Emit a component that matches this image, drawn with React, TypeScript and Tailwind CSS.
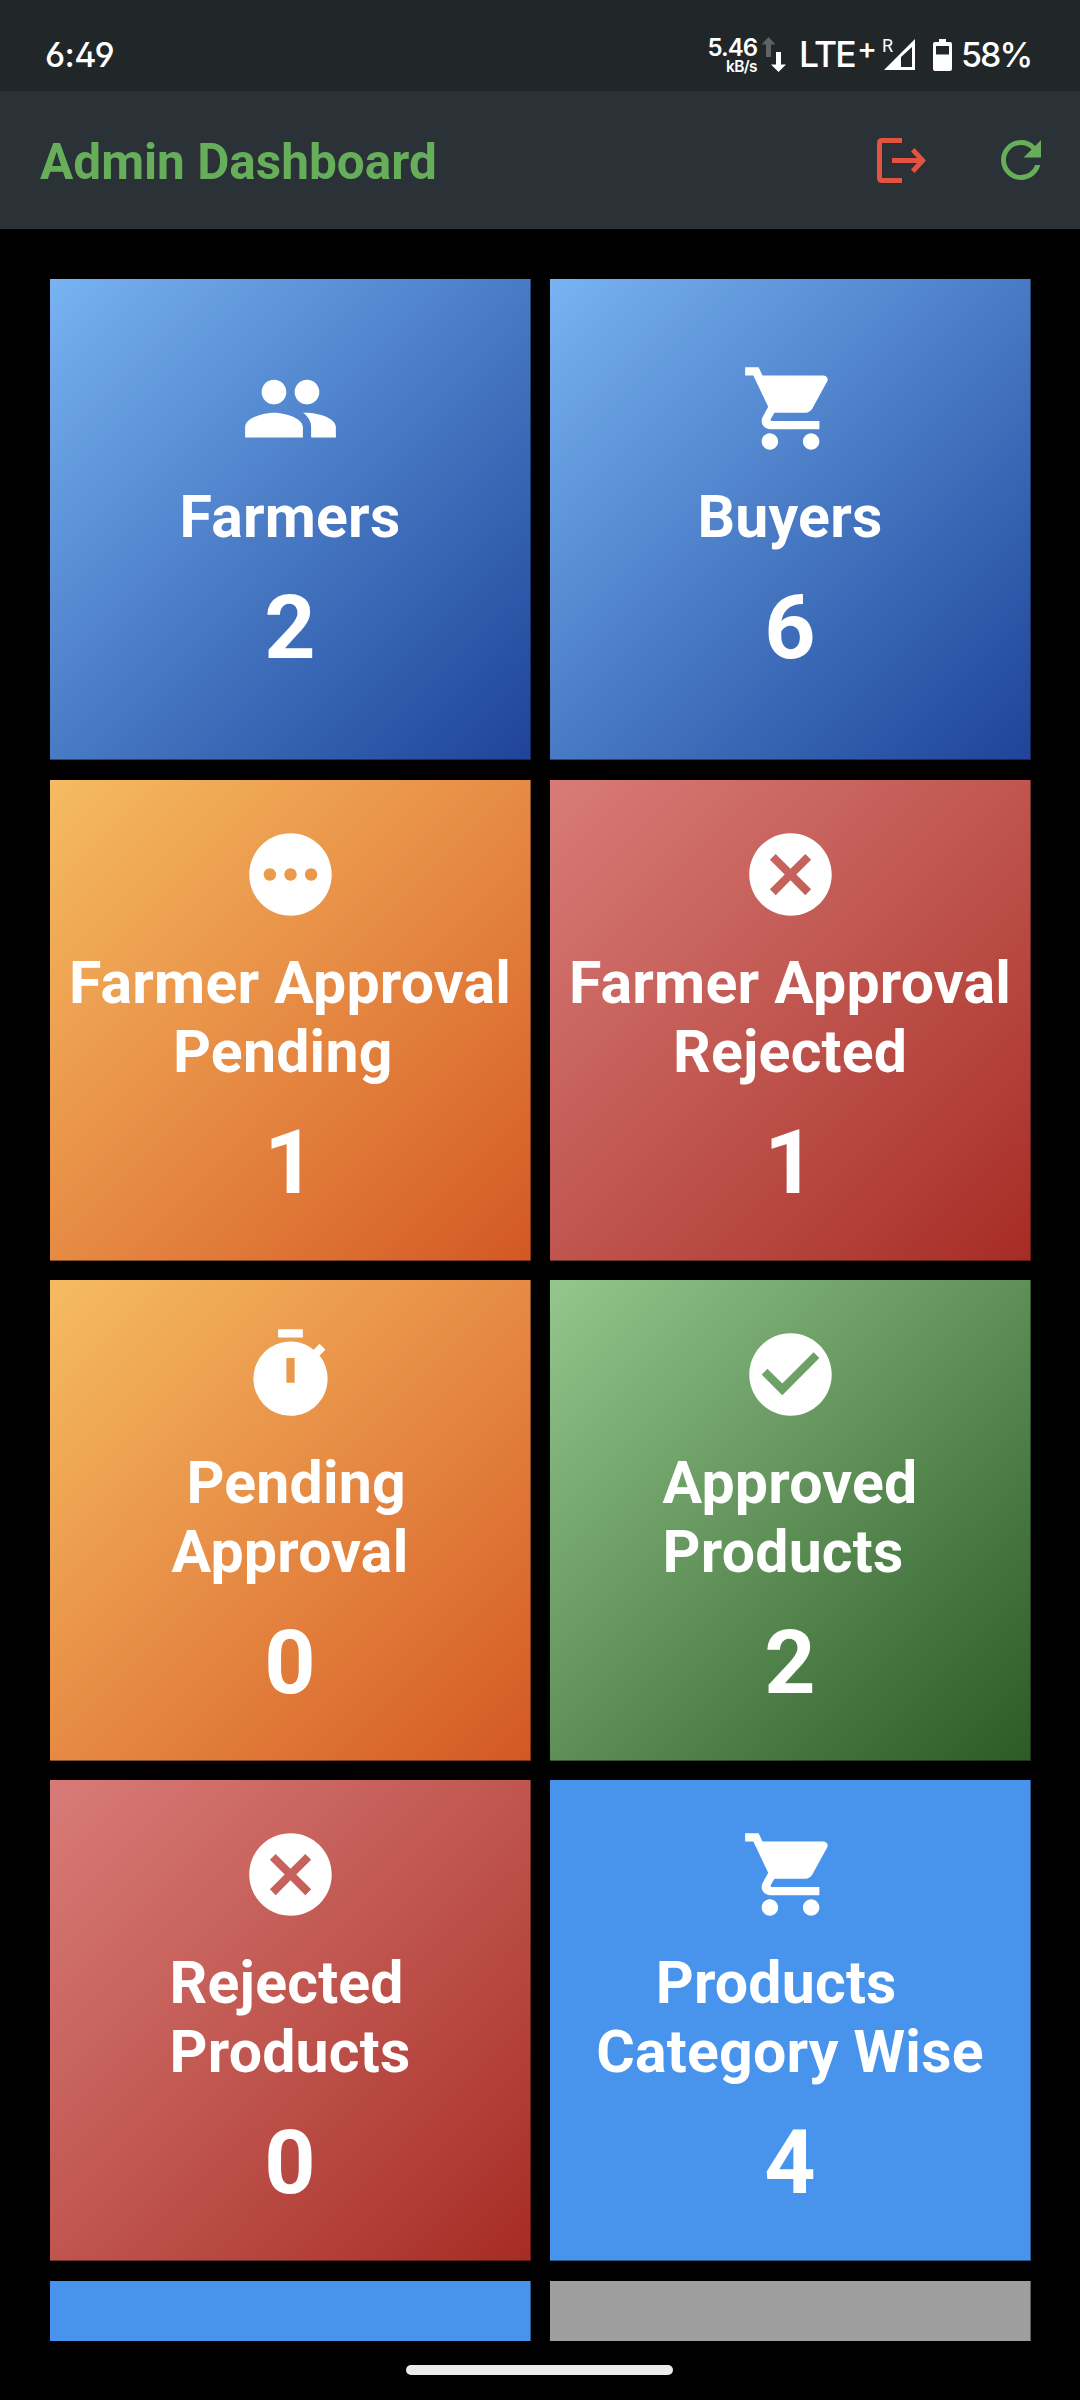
import { MdPeople, MdShoppingCart, MdPending, MdCancel, MdCheckCircle, MdRefresh } from "react-icons/md";

function TimerIcon({ className }: { className?: string }) {
  return (
    <svg viewBox="0 0 24 24" fill="currentColor" className={className}>
      <path
        fillRule="evenodd"
        d="M19.03 7.39L20.45 5.97L19.04 4.56L17.62 6C16.07 4.74 14.12 4 12 4A9 9 0 0 0 3 13A9 9 0 0 0 12 22C17 22 21 17.97 21 13C21 10.88 20.26 8.93 19.03 7.39ZM13 14H11V8H13ZM15 1H9V3H15Z"
      />
    </svg>
  );
}

const tones = {
  blue: "bg-linear-to-br from-[#78b3f2] to-[#1f4398]",
  orange: "bg-linear-to-br from-[#f5bb62] to-[#d35723]",
  red: "bg-linear-to-br from-[#d87b78] to-[#a62b24]",
  green: "bg-linear-to-br from-[#93c78c] to-[#2c5b25]",
  solid: "bg-[#4894ed]",
  gray: "bg-[#9e9e9e]",
};

const cardBox = "h-[481px] shadow-[inset_-1px_-1px_0_rgba(0,0,0,0.4)]";

// Labels keep their literal spaces, which indent individual lines.
const cards = [
  { label: "Farmers", count: "2", tone: tones.blue, Icon: MdPeople },
  { label: "Buyers", count: "6", tone: tones.blue, Icon: MdShoppingCart },
  { label: "Farmer Approval\n       Pending", count: "1", tone: tones.orange, Icon: MdPending },
  { label: "Farmer Approval\n       Rejected", count: "1", tone: tones.red, Icon: MdCancel },
  { label: " Pending\nApproval", count: "0", tone: tones.orange, Icon: TimerIcon },
  { label: "Approved\nProducts", count: "2", tone: tones.green, Icon: MdCheckCircle },
  { label: "Rejected\nProducts", count: "0", tone: tones.red, Icon: MdCancel },
  { label: "    Products\nCategory Wise", count: "4", tone: tones.solid, Icon: MdShoppingCart },
];

function StatusBar() {
  return (
    <div className="flex h-[91px] shrink-0 items-start justify-between bg-[#212629] pt-[37px] pr-[49px] pl-[45px] font-['Inter',sans-serif] text-white">
      <span className="text-[34px] leading-[36px] font-medium tracking-[-0.6px] [font-feature-settings:'ss01','cv03','cv04']">6:49</span>
      <div className="flex h-[36px] items-start whitespace-nowrap">
        <div className="flex w-[50px] flex-col items-end">
          <span className="text-[24px] leading-[21px] font-semibold tracking-[-1px]">5.46</span>
          <span className="text-[15.5px] leading-[17px] font-semibold tracking-[-0.6px]">kB/s</span>
        </div>
        <svg viewBox="0 0 25 36" className="ml-[4px] h-[36px] w-[25px]">
          <path d="M0.500 7.5L7.500 0L14.500 7.5H10V20H5V7.5Z" fill="#5f6366" />
          <path d="M10 27.5L17.500 35L25 27.5H20V15H15V27.5Z" fill="#fff" />
        </svg>
        <span className="ml-[13px] w-[58px] text-[35.5px] leading-[36px] font-[450] tracking-[-1.8px]">LTE</span>
        <span className="w-[19px] text-[30px] leading-[23px] font-medium">+</span>
        <div className="relative ml-[7px] h-[36px] w-[33px]">
          <span className="absolute top-0 left-[-1px] font-['Roboto',sans-serif] text-[18px] leading-[18px] tracking-[-1px]">R</span>
          <svg viewBox="0 0 32 32" className="mt-[2px] ml-[1px] h-[32px] w-[32px]">
            <path fillRule="evenodd" d="M31 0V31H0ZM28 8L17 18V28H28Z" fill="#fff" />
          </svg>
        </div>
        <svg viewBox="0 0 19 32" className="mt-[2px] ml-[17px] h-[32px] w-[19px]">
          <path fillRule="evenodd" d="M6 0H13V3H17Q19 3 19 5V30Q19 32 17 32H2Q0 32 0 30V5Q0 3 2 3H6ZM3 7V15.500H16V7Z" fill="#fff" />
        </svg>
        <span className="ml-[9px] w-[70px] text-[34px] leading-[36px] font-medium tracking-[-2px]">58%</span>
      </div>
    </div>
  );
}

function AppBar() {
  return (
    <header className="flex h-[138px] shrink-0 items-center justify-between bg-[#2a3137] pr-[29px] pl-[40px]">
      <h1 className="pt-[5px] text-[49.5px] leading-none font-bold text-[#67ae5b]">Admin Dashboard</h1>
      <div className="flex items-center gap-[64px]">
        <svg viewBox="0 0 50 46" className="mt-[2px] h-[46px] w-[50px]" fill="#e45340">
          <path d="M25 0H5Q0 0 0 5V40Q0 45 5 45H25V40H5V5H25Z" />
          <path d="M15 20H40L34 13.500L37.500 10L49 22.500L37.500 35L34 31.500L40 25H15Z" />
        </svg>
        <MdRefresh className="size-[60px] text-[#67ae5b]" />
      </div>
    </header>
  );
}

export default function App() {
  return (
    <div className="flex h-[2400px] w-[1080px] flex-col overflow-hidden bg-black font-['Roboto',sans-serif]">
      <StatusBar />
      <AppBar />
      <main className="grid h-[2112px] shrink-0 grid-cols-[481px_481px] content-start gap-x-[19px] gap-y-[19.4px] overflow-hidden px-[50px] pt-[50.2px]">
        {cards.map(({ label, count, tone, Icon }) => (
          <section key={label} className={`flex flex-col items-center justify-center text-white ${cardBox} ${tone}`}>
            <Icon className="size-[99px]" />
            <p className="mt-[24px] pr-[1px] text-[59px] leading-[69px] font-bold tracking-[0.2px] whitespace-pre">{label}</p>
            <p className="mt-[24px] pr-[1px] text-[89.5px] leading-[106px] font-bold">{count}</p>
          </section>
        ))}
        <section className={`${cardBox} ${tones.solid}`} />
        <section className={`${cardBox} ${tones.gray}`} />
      </main>
      <footer className="flex h-[59px] items-start justify-center pt-[24px] pr-[1px]">
        <div className="h-[10px] w-[267px] rounded-full bg-[#ebebeb]" />
      </footer>
    </div>
  );
}
